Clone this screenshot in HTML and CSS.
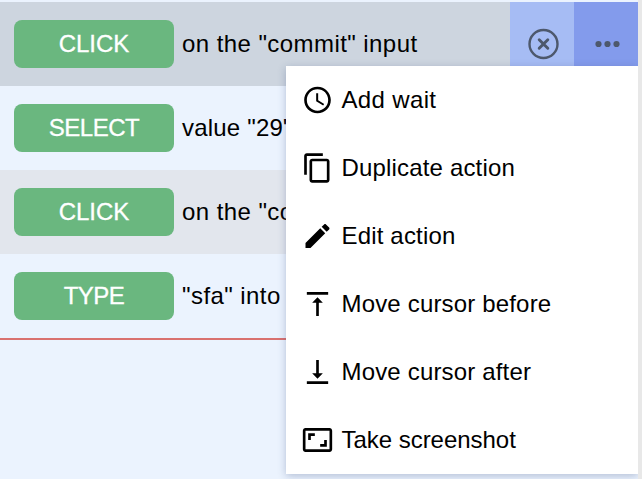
FILE: index.html
```html
<!DOCTYPE html>
<html lang="en">
<head>
<meta charset="utf-8">
<title>Recorded actions</title>
<link rel="stylesheet" href="styles.css">
</head>
<body>
<main class="panel">
  <div class="row row-active">
    <span class="tag">CLICK</span><span class="desc desc-wide">on the "commit" input</span>
    <div class="tools">
      <button class="tool tool-remove" aria-label="Remove"><svg width="32" height="32" viewBox="0 0 32 32" fill="none" stroke="#4d586c"><circle cx="15.5" cy="16" r="14" stroke-width="2.4"/><path d="M11.2 11.7l8.6 8.6M19.8 11.7l-8.6 8.6" stroke-width="2.9" stroke-linecap="round"/></svg></button>
      <button class="tool tool-more" aria-label="More"><svg width="32" height="32" viewBox="0 0 32 32" fill="#4d586c"><circle cx="6.5" cy="16" r="3.1"/><circle cx="15.5" cy="16" r="3.1"/><circle cx="24.5" cy="16" r="3.1"/></svg></button>
      <div class="menu">
        <div class="item"><svg viewBox="0 0 24 24"><path d="M11.99 2C6.47 2 2 6.48 2 12s4.47 10 9.99 10C17.52 22 22 17.52 22 12S17.52 2 11.99 2zM12 20c-4.42 0-8-3.58-8-8s3.58-8 8-8 8 3.58 8 8-3.58 8-8 8zM12.500 7H11v6l5.250 3.150.750-1.230-4.500-2.670z"/></svg><span class="label-wait">Add wait</span></div>
        <div class="item"><svg viewBox="0 0 24 24"><path d="M16 1H4c-1.100 0-2 .900-2 2v14h2V3h12V1zm3 4H8c-1.100 0-2 .900-2 2v14c0 1.100.900 2 2 2h11c1.100 0 2-.900 2-2V7c0-1.100-.900-2-2-2zm0 16H8V7h11v14z"/></svg><span class="label">Duplicate action</span></div>
        <div class="item"><svg viewBox="0 0 24 24"><path d="M3 17.250V21h3.750L17.810 9.940l-3.750-3.750L3 17.250zM20.710 7.040c.390-.390.390-1.020 0-1.410l-2.340-2.340c-.390-.390-1.020-.390-1.410 0l-1.830 1.830 3.750 3.750 1.830-1.830z"/></svg><span class="label">Edit action</span></div>
        <div class="item"><svg viewBox="0 0 24 24"><path d="M8 11h3v10h2V11h3l-4-4-4 4zM4 3v2h16V3H4z"/></svg><span class="label">Move cursor before</span></div>
        <div class="item"><svg viewBox="0 0 24 24"><path d="M16 13h-3V3h-2v10H8l4 4 4-4zM4 19v2h16v-2H4z"/></svg><span class="label">Move cursor after</span></div>
        <div class="item"><svg viewBox="0 0 24 24"><path d="M19 12h-2v3h-3v2h5v-5zM7 9h3V7H5v5h2V9zm14-6H3c-1.100 0-2 .900-2 2v14c0 1.100.900 2 2 2h18c1.100 0 2-.900 2-2V5c0-1.100-.900-2-2-2zm0 16.010H3V4.990h18v14.020z"/></svg><span class="label-shot">Take screenshot</span></div>
      </div>
    </div>
  </div>
  <div class="row"><span class="tag tag-tight">SELECT</span><span class="desc">value "29"</span></div>
  <div class="row row-alt"><span class="tag">CLICK</span><span class="desc desc-wide">on the "co</span></div>
  <div class="row"><span class="tag tag-tight">TYPE</span><span class="desc desc-wide">"sfa" into</span></div>
  <div class="cursor"></div>
</main>
</body>
</html>
```
FILE: styles.css
```css
* { box-sizing: border-box; }
body {
  margin: 0;
  height: 479px;
  overflow: hidden;
  background: #e8e8e8;
  color: #000;
  font: 24px/32px "Liberation Sans", Arial, sans-serif;
}
.panel {
  width: 638px;
  height: 479px;
  padding-top: 2px;
  background: #ebf3fe;
  overflow: hidden;
}
.row {
  display: flex;
  align-items: center;
  height: 84px;
  padding-left: 14px;
  white-space: nowrap;
}
.row-active { background: #cdd5df; }
.row-alt { background: #e2e6ed; }
.tag {
  width: 160px;
  height: 48px;
  margin-right: 8px;
  border-radius: 8px;
  background: #6ab77f;
  color: #fff;
  line-height: 48px;
  text-align: center;
  -webkit-text-stroke: .3px #fff;
}
.tag-tight { letter-spacing: -.5px; }
.desc { letter-spacing: .2px; }
.desc-wide { letter-spacing: .43px; }
.tools {
  position: relative;
  display: flex;
  align-self: stretch;
  margin-left: auto;
}
.tool {
  display: flex;
  align-items: center;
  justify-content: center;
  width: 64px;
  padding: 0;
  border: 0;
}
.tool svg { margin-left: 3px; }
.tool-remove { background: #a6bcf4; }
.tool-more { background: #839bec; }
.menu {
  position: absolute;
  top: 64px;
  right: 0;
  width: 352px;
  height: 408px;
  background: #fff;
  box-shadow: 0 2px 8px rgba(50, 70, 120, .3);
}
.item {
  display: flex;
  align-items: center;
  height: 68px;
  padding-left: 15px;
}
.item svg {
  width: 32px;
  height: 32px;
  margin-right: 8.5px;
  transform: translateX(.5px);
}
.label { letter-spacing: .17px; }
.label-wait { letter-spacing: .35px; }
.label-shot { letter-spacing: -.03px; }
.cursor {
  height: 2px;
  background: #d9716f;
}
```
